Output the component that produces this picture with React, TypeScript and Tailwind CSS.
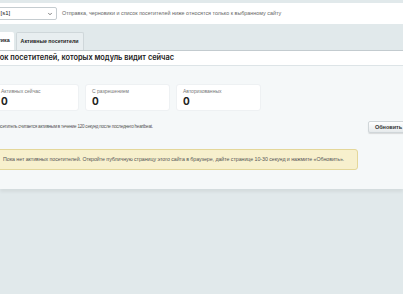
import { ChevronDown } from 'lucide-react';

const stats = [
  { label: 'Активных сейчас', value: 0 },
  { label: 'С разрешением', value: 0 },
  { label: 'Авторизованных', value: 0 },
];

export default function App() {
  return (
    <div className="h-[294px] w-[403px] overflow-hidden bg-[#e1e9eb] pt-[3px] font-['Liberation_Sans',Arial,sans-serif] text-[#333]">
      {/* site selector strip */}
      <div className="flex h-[21px] items-center gap-[5px] bg-white">
        <div className="-ml-[20px] flex h-[13px] w-[77px] items-center justify-between rounded-[2px] border border-[#c5ccd0] bg-white pl-[4px] pr-[3px] text-[6px] text-[#222]">
          <span>Сайт [s1]</span>
          <ChevronDown size={6} strokeWidth={3} className="text-[#555]" />
        </div>
        <span className="text-[5.4px] text-[#666]">
          Отправка, черновики и список посетителей ниже относятся только к выбранному сайту
        </span>
      </div>

      {/* tabs */}
      <div className="mt-[8px] flex h-[18px] items-stretch gap-[2px]">
        <div className="-ml-[24px] flex items-center rounded-t-[2px] bg-white px-[4px] text-[5.3px] font-bold text-[#222]">
          Статистика
        </div>
        <div className="flex items-center rounded-t-[2px] border border-b-0 border-[#cfd7da] bg-[#e8eef0] px-[4px] text-[5.3px] font-bold text-[#222]">
          Активные посетители
        </div>
      </div>

      {/* panel */}
      <div className="border-t border-[#c3cbcf] shadow-[0_3px_3px_rgba(0,0,0,0.06)]">
        <div className="flex h-[15px] items-center border-b border-[#dde4e7] bg-white">
          <span className="-ml-[19px] whitespace-nowrap text-[7.4px] font-semibold text-[#222] font-['Inter',sans-serif]">
            Список посетителей, которых модуль видит сейчас
          </span>
        </div>

        <div className="h-[123px] bg-[#f5f8f9] pt-[18px]">
          <div className="-ml-[6px] flex gap-[6px]">
            {stats.map((s) => (
              <div
                key={s.label}
                className="flex h-[27px] w-[85px] flex-col justify-center rounded-[3px] border border-[#eef1f3] bg-white px-[6px]"
              >
                <div className="text-[5px] leading-[7px] text-[#777]">{s.label}</div>
                <div className="text-[10px] font-bold leading-[12px] text-[#222] font-['Inter',sans-serif]">{s.value}</div>
              </div>
            ))}
          </div>

          <div className="mt-[10px] flex h-[12px] items-center justify-between">
            <span className="-ml-[5px] whitespace-nowrap text-[4.6px] tracking-[-0.25px] text-[#555]">
              Посетитель считается активным в течение 120 секунд после последнего heartbeat.
            </span>
            <button className="-mr-[6px] h-[12px] w-[41px] rounded-[2px] border border-[#d0d6d9] bg-gradient-to-b from-white to-[#e6eaec] text-[5.5px] font-bold text-[#333] shadow-[0_1px_1px_rgba(0,0,0,0.12)]">
              Обновить
            </button>
          </div>

          <div className="-ml-[6px] mt-[16px] flex h-[21px] w-[364px] items-center rounded-[3px] border border-[#e4d79a] bg-[#f7f0cd] pl-[8px] text-[5.3px] tracking-[-0.06px] text-[#555]">
            <span className="whitespace-nowrap">
              Пока нет активных посетителей. Откройте публичную страницу этого сайта в браузере, дайте странице 10-30 секунд и нажмите «Обновить».
            </span>
          </div>
        </div>
      </div>
    </div>
  );
}
